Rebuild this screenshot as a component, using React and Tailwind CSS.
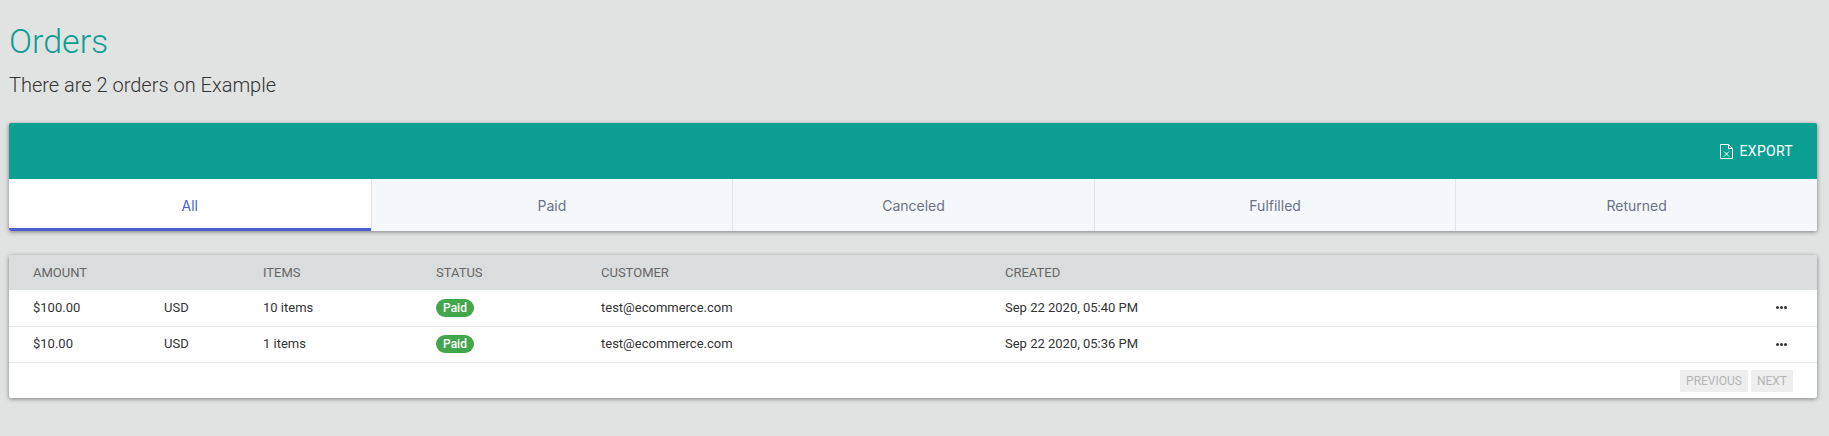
import React from 'react';

const tabs = ['All', 'Paid', 'Canceled', 'Fulfilled', 'Returned'];

const orders = [
  { amount: '$100.00', currency: 'USD', items: '10 items', status: 'Paid', customer: 'test@ecommerce.com', created: 'Sep 22 2020, 05:40 PM' },
  { amount: '$10.00', currency: 'USD', items: '1 items', status: 'Paid', customer: 'test@ecommerce.com', created: 'Sep 22 2020, 05:36 PM' },
];

const ExcelIcon = () => (
  <svg width="13" height="15" viewBox="0 0 13 15" fill="none" stroke="white" strokeWidth="1">
    <path d="M0.5 0.5H8.5L12.5 4.5V14.5H0.5Z" />
    <path d="M8.5 0.5V4.5H12.5" />
    <path d="M4 7.5L9 12.5M9 7.5L4 12.5" />
  </svg>
);

const App = () => (
  <div className="min-h-[436px] bg-[#e1e3e2] pl-[9px] pr-[12px] pt-[22px] font-['Roboto',sans-serif]">
    <h1 className="text-[34px] leading-[38px] font-light text-[#0b9e92]">Orders</h1>
    <p className="mt-[13px] text-[20px] leading-[24px] font-light text-[#333]">There are 2 orders on Example</p>

    {/* Export bar + tabs */}
    <div className="mt-[26px] rounded-[2px] shadow-[0_1px_4px_rgba(0,0,0,0.45)] overflow-hidden">
      <div className="h-[56px] bg-[#0b9e92] flex items-center justify-end pr-[24px]">
        <button className="flex items-center gap-[7px] text-[14px] font-normal tracking-[0.3px] text-white">
          <ExcelIcon />
          EXPORT
        </button>
      </div>
      <div className="grid grid-cols-5 h-[52px] bg-[#f5f8fb]">
        {tabs.map((tab, idx) => (
          <div
            key={tab}
            className={`flex items-center justify-center text-[14px] font-['Inter',sans-serif] ${
              idx === 0
                ? 'bg-white text-[#4a5fd0] shadow-[inset_0_-3px_0_#4a5fd0]'
                : 'text-[#6b7285] border-l border-[#e2e5e8]'
            }`}
          >
            {tab}
          </div>
        ))}
      </div>
    </div>

    {/* Orders table */}
    <div className="mt-[24px] bg-white rounded-[2px] shadow-[0_1px_4px_rgba(0,0,0,0.45)] overflow-hidden">
      <table className="w-full table-fixed text-left">
        <colgroup>
          <col className="w-[155px]" />
          <col className="w-[99px]" />
          <col className="w-[173px]" />
          <col className="w-[165px]" />
          <col className="w-[404px]" />
          <col />
          <col className="w-[60px]" />
        </colgroup>
        <thead>
          <tr className="h-[35px] bg-[#dadddd] text-[13px] text-[#666]">
            <th className="pl-[24px] font-normal">AMOUNT</th>
            <th></th>
            <th className="font-normal">ITEMS</th>
            <th className="font-normal">STATUS</th>
            <th className="font-normal">CUSTOMER</th>
            <th className="font-normal">CREATED</th>
            <th></th>
          </tr>
        </thead>
        <tbody>
          {orders.map((order) => (
            <tr key={order.created} className="h-[36px] border-b border-[#e8e8e8] text-[13px] text-[#333]">
              <td className="pl-[24px]">{order.amount}</td>
              <td>{order.currency}</td>
              <td>{order.items}</td>
              <td>
                <span className="inline-flex h-[18px] w-[38px] items-center justify-center rounded-full bg-[#43a64c] text-[12px] font-medium text-white">
                  {order.status}
                </span>
              </td>
              <td>{order.customer}</td>
              <td>{order.created}</td>
              <td>
                <div className="flex gap-[1px] pl-[19px]">
                  <span className="h-[3px] w-[3px] rounded-full bg-[#333]"></span>
                  <span className="h-[3px] w-[3px] rounded-full bg-[#333]"></span>
                  <span className="h-[3px] w-[3px] rounded-full bg-[#333]"></span>
                </div>
              </td>
            </tr>
          ))}
        </tbody>
      </table>
      <div className="h-[35px] flex items-start justify-end gap-[3px] pt-[7px] pr-[24px]">
        <button className="h-[22px] px-[6px] bg-[#eeeeee] text-[12px] text-[#b5b5b5]">PREVIOUS</button>
        <button className="h-[22px] px-[6px] bg-[#eeeeee] text-[12px] text-[#b5b5b5]">NEXT</button>
      </div>
    </div>
  </div>
);

export default App;
